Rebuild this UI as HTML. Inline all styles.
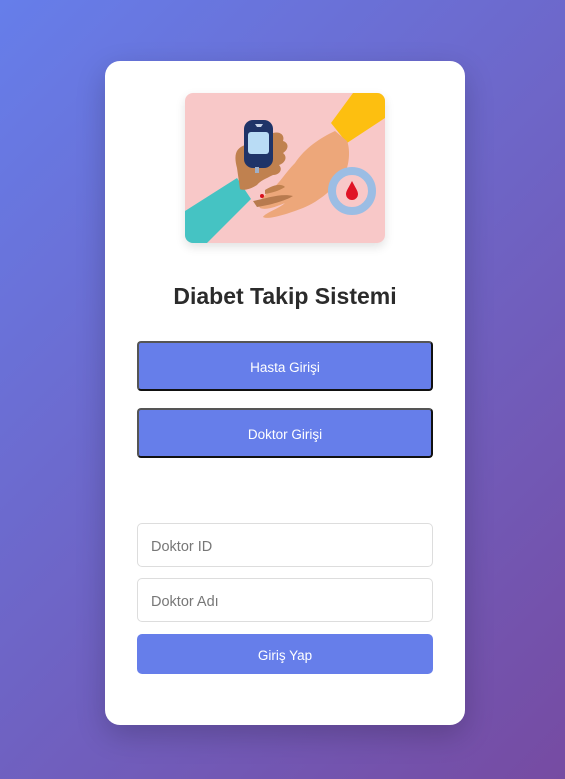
<!DOCTYPE html>
<html><head><meta charset="utf-8"><style>
*{box-sizing:border-box;margin:0;padding:0}
html,body{width:565px;height:779px;overflow:hidden}
body{background:linear-gradient(135deg,#667eea 0%,#764ba2 100%);font-family:"Liberation Sans",sans-serif;position:relative}
.card{position:absolute;left:105px;top:61px;width:360px;height:664px;background:#fff;border-radius:15px;box-shadow:0 10px 30px rgba(0,0,0,.2)}
.img{position:absolute;left:80px;top:32px;width:200px;height:150px;border-radius:8px;overflow:hidden;box-shadow:0 4px 10px rgba(0,0,0,.12)}
h1{position:absolute;left:0;right:0;top:222px;text-align:center;font-size:23px;font-weight:bold;color:#2b2b2b}
.btn{position:absolute;left:32px;width:296px;height:50px;background:#667eea;border:2px solid;border-color:#555 #111 #111 #555;border-radius:4px;color:#fff;font-size:13.5px;display:flex;align-items:center;justify-content:center;padding-top:3px}
.inp{position:absolute;left:32px;width:296px;height:44px;border:1px solid #ddd;border-radius:5px;color:#777;font-size:14.5px;padding-left:13px;padding-top:4px;display:flex;align-items:center}
.go{position:absolute;left:32px;top:573px;width:296px;height:40px;background:#667eea;border-radius:5px;color:#fff;font-size:13.5px;display:flex;align-items:center;justify-content:center;padding-top:3px}
</style></head><body>
<div class="card">
<div class="img"><svg width="200" height="150" viewBox="0 0 200 150">
<rect width="200" height="150" fill="#f8c8c8"/>
<polygon points="168,0 200,0 200,25 162,50 146,30" fill="#fdbf10"/>
<polygon points="0,118 52,85 66,106 22,150 0,150" fill="#45c3c3"/>
<path d="M150,38 C135,45 120,55 110,70 C100,80 95,90 85,98 C78,103 72,110 75,115 C82,118 95,112 100,110 C95,115 80,120 78,124 C82,127 100,122 118,115 C135,108 150,95 160,80 C165,70 165,55 162,48 Z" fill="#eda77a"/>
<path d="M52,75 C48,60 52,55 60,52 L88,40 C95,38 100,42 98,48 C104,50 104,56 98,60 C103,64 100,70 94,72 C98,76 95,82 88,82 C80,86 75,88 72,92 C66,96 58,98 55,96 Z" fill="#c0814f"/>
<path d="M68,108 C80,106 95,100 108,103 C100,108 85,112 72,114 Z" fill="#b87a4e"/>
<path d="M80,97 C88,92 96,90 100,94 C94,98 86,100 80,101 Z" fill="#c0814f"/>
<circle cx="77" cy="103" r="2" fill="#d8101e"/>
<rect x="59" y="27" width="29" height="48" rx="9" fill="#1f3468"/>
<rect x="63" y="39" width="21" height="22" rx="3" fill="#b9dcf5"/>
<path d="M70,31 h8 l-2,3 h-4z" fill="#c8d4e8"/>
<rect x="70" y="74" width="4" height="6" fill="#9fb0c8"/>
<circle cx="167" cy="98" r="20" fill="none" stroke="#9bbde4" stroke-width="8"/>
<path d="M167,88 C170,94 173,98 173,101 A6,6 0 0 1 161,101 C161,98 164,94 167,88Z" fill="#e01426"/>
</svg></div>
<h1>Diabet Takip Sistemi</h1>
<div class="btn" style="top:280px">Hasta Girişi</div>
<div class="btn" style="top:347px">Doktor Girişi</div>
<div class="inp" style="top:462px">Doktor ID</div>
<div class="inp" style="top:517px">Doktor Adı</div>
<div class="go">Giriş Yap</div>
</div>
</body></html>
